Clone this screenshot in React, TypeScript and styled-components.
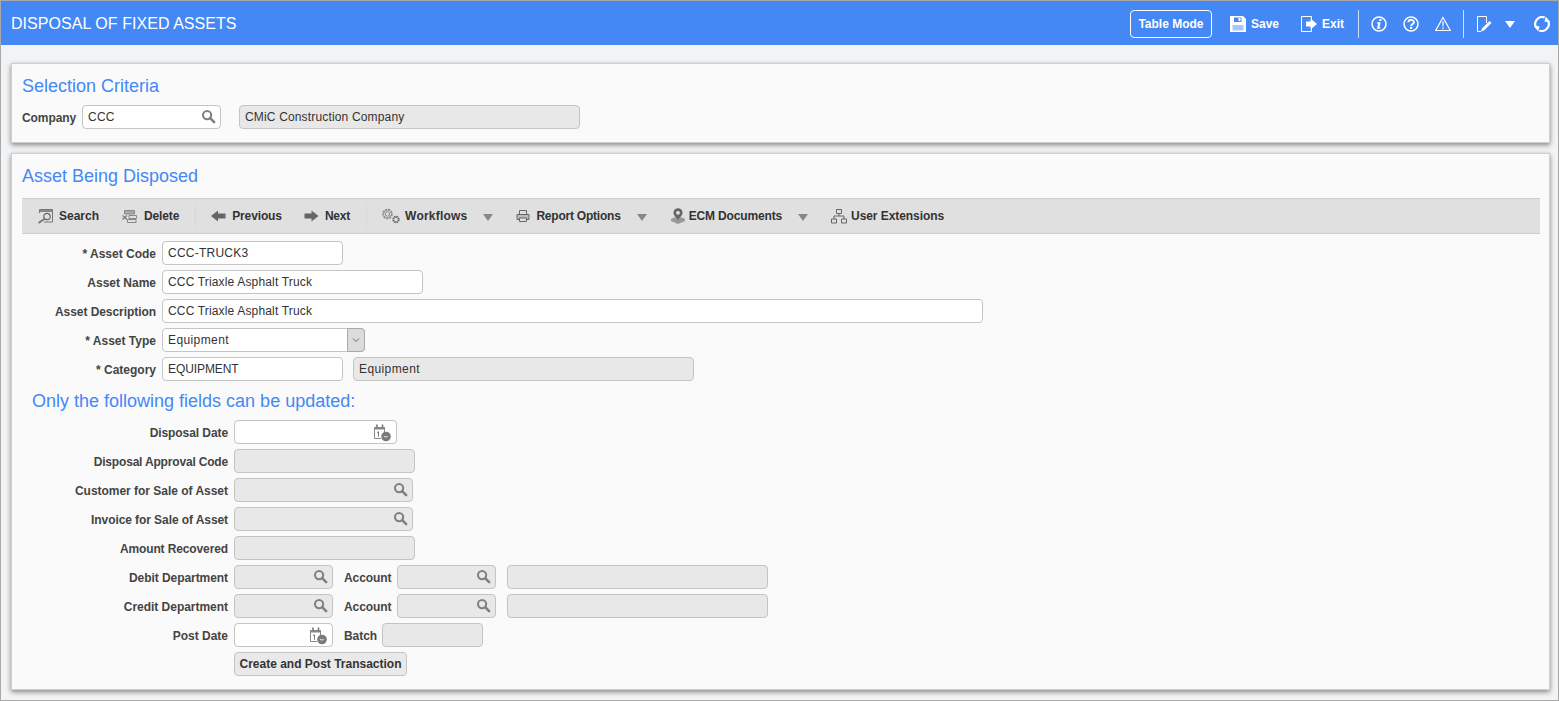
import React from "react";
import styled, { createGlobalStyle } from "styled-components";

const Global = createGlobalStyle`
  html, body { margin: 0; padding: 0; height: 100%; overflow: hidden; }
  body { font-family: "Liberation Sans", Arial, sans-serif; font-size: 12px; color: #333; }
  * { box-sizing: border-box; }
`;
const Page = styled.div`
  width: 1559px; height: 701px; display: flex; flex-direction: column;
  background: #f2f3f5; border: 1px solid #a9a9a9; overflow: hidden;
`;
const Header = styled.header`
  height: 44px; flex: none; background: #4488f6; display: flex; align-items: center;
  padding: 2px 8px 0 10px; color: #fff;
`;
const AppTitle = styled.h1`
  margin: 0; font-size: 16px; font-weight: 400; color: #fff; flex: 1; letter-spacing: 0.05px;
`;
const TableMode = styled.button`
  font: bold 12px "Liberation Sans", Arial, sans-serif; color: #fff; background: transparent;
  border: 1px solid #fff; border-radius: 4px; width: 82px; height: 28px; padding: 0; margin-right: 18px;
`;
const HeadAction = styled.span<{ $mr?: number }>`
  display: inline-flex; align-items: center; gap: 5px; font-weight: 700; font-size: 12px;
  margin-right: ${(p) => p.$mr ?? 0}px; color: #fff;
`;
const HeadSep = styled.span<{ $mr: number }>`
  width: 1px; height: 28px; background: #cfe0fc; margin-right: ${(p) => p.$mr}px;
`;
const HeadIcon = styled.svg<{ $mr?: number }>`
  display: block; flex: none; width: 16px; height: 16px; margin-right: ${(p) => p.$mr ?? 0}px;
`;
const CaretWhite = styled.span`
  width: 0; height: 0; border-left: 5px solid transparent; border-right: 5px solid transparent;
  border-top: 7px solid #fff; margin: 1px 19px 0 0;
`;
const Content = styled.main`
  flex: 1; padding: 18px 8px 0 10px; display: flex; flex-direction: column; gap: 10px;
`;
const Panel = styled.section<{ $h: number }>`
  height: ${(p) => p.$h}px; flex: none; background: #fafafa; border: 1px solid #cfcfcf;
  box-shadow: 0 2px 5px rgba(0, 0, 0, 0.45); padding: 0 9px 0 10px;
`;
const PanelTitle = styled.h2<{ $mt: number; $mb: number; $ml?: number }>`
  margin: ${(p) => p.$mt}px 0 ${(p) => p.$mb}px ${(p) => p.$ml ?? 0}px; font-size: 18px; line-height: 22px;
  font-weight: 400; color: #4488f6;
`;
const Toolbar = styled.div`
  height: 36px; margin-bottom: 7px; background: #e0e0e0; border-top: 1px solid #cdcdcd; border-bottom: 1px solid #cdcdcd;
  display: flex; align-items: center; padding-left: 15px;
`;
const ToolItem = styled.span<{ $gap?: number; $ls?: number }>`
  display: inline-flex; align-items: center; gap: ${(p) => p.$gap ?? 6}px; font-weight: 700; color: #333;
  margin-right: 22px; letter-spacing: ${(p) => p.$ls ?? 0}px;
`;
const ToolSep = styled.span`
  width: 1px; height: 24px; background: #d8d8d8; margin: 0 15px 0 -6px;
`;
const ToolCaret = styled.span`
  width: 0; height: 0; border-left: 5px solid transparent; border-right: 5px solid transparent;
  border-top: 7px solid #888; margin: 2px 23px 0 -6px;
`;
const ToolIcon = styled.svg<{ $w?: number }>`
  display: block; flex: none; width: ${(p) => p.$w ?? 16}px; height: 16px;
`;
const Form = styled.div`
  display: flex; flex-direction: column; gap: 5px;
`;
const SubForm = styled(Form)`
  margin-top: 8px;
`;
const Row = styled.div`
  display: flex; align-items: center; height: 24px;
`;
const Label = styled.label<{ $w: number; $ml?: number; $ls?: number }>`
  width: ${(p) => p.$w}px; margin-left: ${(p) => p.$ml ?? 0}px; margin-right: 6px; padding-top: 2px; flex: none; text-align: right;
  font-weight: 700; color: #444; white-space: nowrap; letter-spacing: ${(p) => p.$ls ?? 0}px;
`;
const Field = styled.div<{ $w: number; $off?: boolean; $ml?: number; $ls?: number }>`
  position: relative; width: ${(p) => p.$w}px; height: 24px; flex: none; margin-left: ${(p) => p.$ml ?? 0}px;
  border: 1px solid #c4c4c4; border-radius: 4px; background: ${(p) => (p.$off ? "#e8e8e8" : "#fff")};
  padding: 0 5px; line-height: 22px; font-size: 12px; color: #333; white-space: nowrap;
  letter-spacing: ${(p) => p.$ls ?? 0.24}px;
`;
const IconSlot = styled.span<{ $r: number; $t: number }>`
  position: absolute; display: block; line-height: 0; right: ${(p) => p.$r}px; top: ${(p) => p.$t}px;
`;
const SelectBtn = styled.span`
  position: absolute; right: -1px; top: -1px; bottom: -1px; width: 18px; background: #dcdcdc;
  border: 1px solid #aaa; border-radius: 0 4px 4px 0; display: flex; align-items: center; justify-content: center;
`;
const ActionButton = styled.button`
  margin-left: 212px; width: 173px; height: 24px; padding: 0; border: 1px solid #c4c4c4; border-radius: 4px;
  background: #e9e9e9; color: #333; font: bold 12px "Liberation Sans", Arial, sans-serif;
`;

const Mag = () => (
  <IconSlot $r={4} $t={3}>
    <svg width="15" height="15" viewBox="0 0 16 16" fill="none">
      <circle cx="6.500" cy="6.500" r="4.400" stroke="#808080" strokeWidth="2.200" />
      <path d="M9.800 9.800 14 14" stroke="#808080" strokeWidth="2.800" strokeLinecap="round" />
    </svg>
  </IconSlot>
);
const CalClock = () => (
  <IconSlot $r={5} $t={3}>
    <svg width="17" height="18" viewBox="0 0 17 18" fill="none">
      <path d="M.5 3.500h10V8M.5 3.500V14.500H7" stroke="#888" />
      <path d="M.5 3h10v2.500H.5z" fill="#888" />
      <path d="M3 .5v3M8.500.5v3" stroke="#777" strokeWidth="1.600" />
      <path d="M3 8.500 4.500 7.800v5" stroke="#777" />
      <circle cx="12" cy="12.500" r="4.800" fill="#7a7a7a" />
      <path d="M9.800 12.300q1.500 1.200 3.800.3" stroke="#eee" />
    </svg>
  </IconSlot>
);
const Chevron = () => (
  <svg width="10" height="10" viewBox="0 0 10 10" fill="none">
    <path d="M2 3.500 5 6.500 8 3.500" stroke="#666" />
  </svg>
);

export default function App() {
  return (
    <Page>
      <Global />
      <Header>
        <AppTitle>DISPOSAL OF FIXED ASSETS</AppTitle>
        <TableMode>Table Mode</TableMode>
        <HeadAction $mr={22}>
          <HeadIcon viewBox="0 0 16 16" fill="#fff">
            <path d="M0 0h13l3 3v13H0z" />
            <path d="M4 1.500h7.500v4.500H4z" fill="#4488f6" />
            <path d="M8.500 2h2v3h-2z" />
            <path d="M2.500 9h11v5.500h-11z" fill="#a9c8fa" />
          </HeadIcon>
          Save
        </HeadAction>
        <HeadAction $mr={14}>
          <HeadIcon viewBox="0 0 16 16" fill="none">
            <path d="M10.500 5V.5H.5v15h10V11" stroke="#fff" />
            <path d="M5 5.500h4.500V2.500L16 8l-6.500 5.500v-3H5z" fill="#fff" />
          </HeadIcon>
          Exit
        </HeadAction>
        <HeadSep $mr={12} />
        <HeadIcon $mr={16} viewBox="0 0 16 16" fill="none">
          <circle cx="8" cy="8" r="7" stroke="#fff" strokeWidth="1.500" />
          <path d="M8.500 3h2.200l-.5 2H8z" fill="#fff" />
          <path d="M6 6.300h3.700l-1.300 5.200h1.200l-.3 1.200H5.900l1.300-5.200H5.800z" fill="#fff" />
        </HeadIcon>
        <HeadIcon $mr={16} viewBox="0 0 16 16" fill="none">
          <circle cx="8" cy="8" r="7" stroke="#fff" strokeWidth="1.500" />
          <path d="M5.300 6.300C5.300 3.100 10.900 3.100 10.900 6.200c0 2-2.800 2-2.800 3.700" stroke="#fff" strokeWidth="1.800" />
          <path d="M7 10.800h2.200V13H7z" fill="#fff" />
        </HeadIcon>
        <HeadIcon $mr={12} viewBox="0 0 16 16" fill="none">
          <path d="M8 1.500 15.300 14.500H.7z" stroke="#fff" strokeWidth="1.200" />
          <path d="M7.300 5.500h1.400l-.2 5h-1zM7.300 11.500h1.400V13H7.300z" fill="#fff" />
        </HeadIcon>
        <HeadSep $mr={12} />
        <HeadIcon $mr={13} viewBox="0 0 16 16" fill="none">
          <path d="M10.500 7V.5H1.500v15H5" stroke="#fff" />
          <path d="M5 15.500 6 12.500 13.500 5l2 2L8 14.500z" fill="#fff" />
        </HeadIcon>
        <CaretWhite />
        <HeadIcon viewBox="0 0 16 16" fill="none">
          <path d="M10.700 1.600A6.900 6.900 0 0 0 2.300 11.700" stroke="#fff" strokeWidth="2.200" />
          <path d="M5.300 14.400A6.900 6.900 0 0 0 13.700 4.300" stroke="#fff" strokeWidth="2.200" />
          <path d="M0 10 5.500 10.300 4.200 15.500zM16 6 10.500 5.700 11.800.5z" fill="#fff" />
        </HeadIcon>
      </Header>
      <Content>
        <Panel $h={80}>
          <PanelTitle $mt={11} $mb={8}>Selection Criteria</PanelTitle>
          <Row>
            <Label $w={54} $ls={-0.08}>Company</Label>
            <Field $w={139}>CCC<Mag /></Field>
            <Field $w={341} $off $ml={18} $ls={0.16}>CMiC Construction Company</Field>
          </Row>
        </Panel>
        <Panel $h={537}>
          <PanelTitle $mt={11} $mb={11}>Asset Being Disposed</PanelTitle>
          <Toolbar>
            <ToolItem>
              <ToolIcon viewBox="0 0 16 16" fill="none">
                <path d="M2.500 5V1.500h13v12.500H7" stroke="#777" />
                <path d="M3 2h12v2H3z" fill="#888" />
                <circle cx="10" cy="8.500" r="3.200" stroke="#666" strokeWidth="1.200" />
                <path d="M7.700 10.800 1.500 15" stroke="#777" strokeWidth="1.800" />
              </ToolIcon>
              Search
            </ToolItem>
            <ToolItem $gap={7} $ls={-0.15}>
              <ToolIcon viewBox="0 0 16 16" fill="none">
                <path d="M3.500 2.500h10v3.500h-10z" stroke="#888" fill="#aaa" />
                <path d="M8 7.500h7.500v3H8zM6.500 11.500h8.500v3H6.500z" stroke="#888" />
                <path d="M1.500 7.500 6 11.500M6 7.500 1.500 11.500" stroke="#777" strokeWidth="1.100" />
              </ToolIcon>
              Delete
            </ToolItem>
            <ToolSep />
            <ToolItem $ls={-0.12}>
              <ToolIcon $w={15} viewBox="0 0 15 16">
                <path d="M0 8 7 2.500V5.500H14.500V10.500H7V13.500z" fill="#666" />
              </ToolIcon>
              Previous
            </ToolItem>
            <ToolItem $ls={-0.2}>
              <ToolIcon $w={15} viewBox="0 0 15 16">
                <path d="M14.500 8 7.500 2.500V5.500H.5V10.500H7.500V13.500z" fill="#666" />
              </ToolIcon>
              Next
            </ToolItem>
            <ToolSep />
            <ToolItem $gap={5} $ls={0.2}>
              <ToolIcon $w={18} viewBox="0 0 18 16" fill="none">
                <circle cx="5.500" cy="6" r="4.300" stroke="#8c8c8c" strokeWidth="2" strokeDasharray="2.200 .7" />
                <circle cx="5.500" cy="6" r="2.200" stroke="#8c8c8c" />
                <circle cx="14" cy="11.500" r="2.700" stroke="#6e6e6e" strokeWidth="2" strokeDasharray="1.600 .5" />
              </ToolIcon>
              Workflows
            </ToolItem>
            <ToolCaret />
            <ToolItem $ls={-0.22}>
              <ToolIcon $w={14} viewBox="0 0 14 16" fill="none">
                <path d="M3.500 6V2.500h7V6" stroke="#666" />
                <path d="M1 6.500h12v5H1z" stroke="#666" fill="#bbb" />
                <path d="M3.500 10h7v3.500h-7z" stroke="#666" fill="#e0e0e0" />
              </ToolIcon>
              Report Options
            </ToolItem>
            <ToolCaret />
            <ToolItem $gap={3} $ls={-0.15}>
              <ToolIcon viewBox="0 0 16 16" fill="none">
                <path d="M1 11 5 9l3 3 3-3 4 2v2l-7 3-7-3z" fill="#999" />
                <circle cx="8" cy="4.800" r="4.600" fill="#666" />
                <circle cx="8" cy="4.800" r="1.900" fill="#e0e0e0" />
                <path d="M5 8 8 12.500 11 8z" fill="#666" />
              </ToolIcon>
              ECM Documents
            </ToolItem>
            <ToolCaret />
            <ToolItem $gap={4} $ls={-0.07}>
              <ToolIcon viewBox="0 0 16 16" fill="none">
                <path d="M5.500 1.500h5v4h-5zM.5 11h5v4h-5zM10.500 11h5v4h-5z" stroke="#666" />
                <path d="M8 5.500V8M3 11V8h10v3" stroke="#666" />
              </ToolIcon>
              User Extensions
            </ToolItem>
          </Toolbar>
          <Form>
            <Row>
              <Label $w={134}>* Asset Code</Label>
              <Field $w={181}>CCC-TRUCK3</Field>
            </Row>
            <Row>
              <Label $w={134}>Asset Name</Label>
              <Field $w={261} $ls={0.16}>CCC Triaxle Asphalt Truck</Field>
            </Row>
            <Row>
              <Label $w={134} $ls={-0.06}>Asset Description</Label>
              <Field $w={821} $ls={0.16}>CCC Triaxle Asphalt Truck</Field>
            </Row>
            <Row>
              <Label $w={134}>* Asset Type</Label>
              <Field $w={203} $ls={0.4}>Equipment<SelectBtn><Chevron /></SelectBtn></Field>
            </Row>
            <Row>
              <Label $w={134}>* Category</Label>
              <Field $w={181} $ls={-0.09}>EQUIPMENT</Field>
              <Field $w={341} $off $ml={10} $ls={0.4}>Equipment</Field>
            </Row>
          </Form>
          <PanelTitle $mt={9} $mb={0} $ml={10}>Only the following fields can be updated:</PanelTitle>
          <SubForm>
            <Row>
              <Label $w={206} $ls={-0.08}>Disposal Date</Label>
              <Field $w={163}><CalClock /></Field>
            </Row>
            <Row>
              <Label $w={206} $ls={-0.18}>Disposal Approval Code</Label>
              <Field $w={181} $off />
            </Row>
            <Row>
              <Label $w={206} $ls={-0.02}>Customer for Sale of Asset</Label>
              <Field $w={179} $off><Mag /></Field>
            </Row>
            <Row>
              <Label $w={206} $ls={-0.08}>Invoice for Sale of Asset</Label>
              <Field $w={179} $off><Mag /></Field>
            </Row>
            <Row>
              <Label $w={206} $ls={-0.12}>Amount Recovered</Label>
              <Field $w={181} $off />
            </Row>
            <Row>
              <Label $w={206} $ls={-0.06}>Debit Department</Label>
              <Field $w={99} $off><Mag /></Field>
              <Label $w={47} $ml={11} $ls={-0.1}>Account</Label>
              <Field $w={99} $off><Mag /></Field>
              <Field $w={261} $off $ml={11} />
            </Row>
            <Row>
              <Label $w={206} $ls={-0.03}>Credit Department</Label>
              <Field $w={99} $off><Mag /></Field>
              <Label $w={47} $ml={11} $ls={-0.1}>Account</Label>
              <Field $w={99} $off><Mag /></Field>
              <Field $w={261} $off $ml={11} />
            </Row>
            <Row>
              <Label $w={206}>Post Date</Label>
              <Field $w={99}><CalClock /></Field>
              <Label $w={32} $ml={11} $ls={-0.05}>Batch</Label>
              <Field $w={101} $off />
            </Row>
            <Row>
              <ActionButton>Create and Post Transaction</ActionButton>
            </Row>
          </SubForm>
        </Panel>
      </Content>
    </Page>
  );
}
